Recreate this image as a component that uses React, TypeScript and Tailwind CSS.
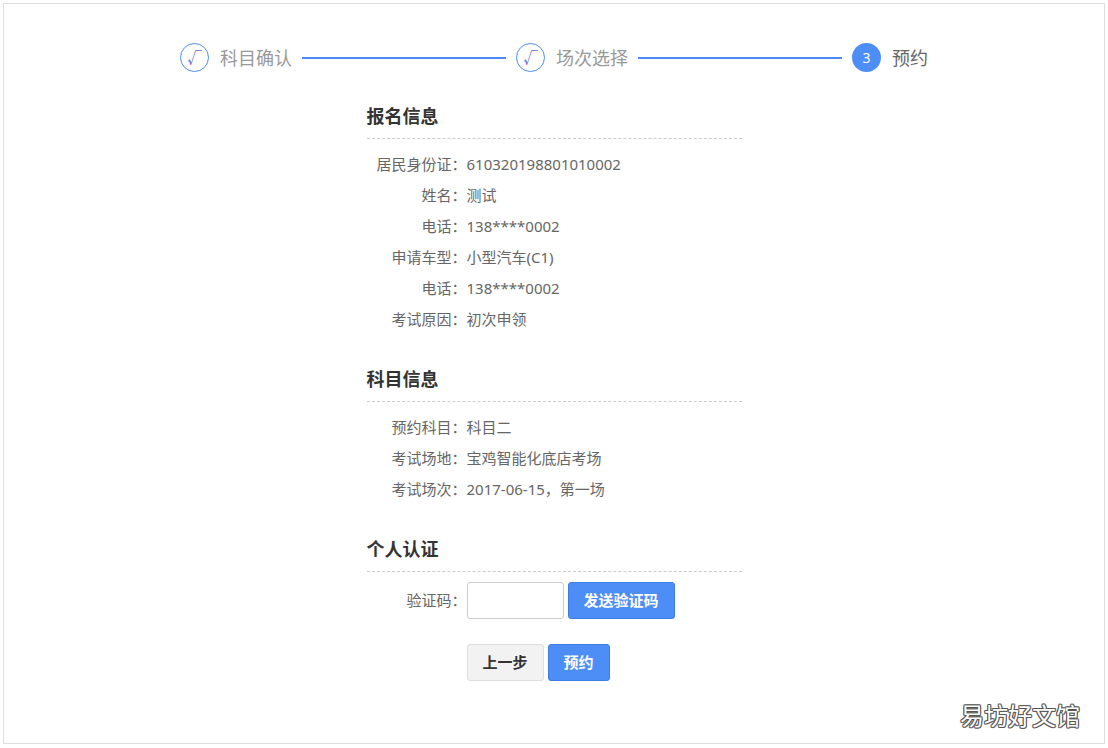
import React from "react";

const FONT = '"Noto Sans", "Noto Sans CJK SC", sans-serif';

type Row = { label: string; value: string };

const signupRows: Row[] = [
  { label: "居民身份证", value: "610320198801010002" },
  { label: "姓名", value: "测试" },
  { label: "电话", value: "138****0002" },
  { label: "申请车型", value: "小型汽车(C1)" },
  { label: "电话", value: "138****0002" },
  { label: "考试原因", value: "初次申领" },
];

const subjectRows: Row[] = [
  { label: "预约科目", value: "科目二" },
  { label: "考试场地", value: "宝鸡智能化底店考场" },
  { label: "考试场次", value: "2017-06-15，第一场" },
];

function StepDone({ label }: { label: string }) {
  return (
    <div className="flex items-center shrink-0">
      <div className="w-[29px] h-[29px] rounded-full border border-[#4d8ef6] flex items-center justify-center text-[15px] text-[#6a5fd8]">
        √
      </div>
      <span className="ml-[11px] text-[18px] leading-[24px] text-[#999]">{label}</span>
    </div>
  );
}

function Line() {
  return <div className="flex-1 h-[2px] bg-[#4a8af4] mx-[10px]" />;
}

function Section({ title, children, first }: { title: string; children: React.ReactNode; first?: boolean }) {
  return (
    <div className={first ? "" : "mt-[32px]"}>
      <h2 className="text-[18px] leading-[24px] font-bold text-[#333] pb-[10px] border-b border-dashed border-[#ccc]">
        {title}
      </h2>
      <div className="mt-[10px]">{children}</div>
    </div>
  );
}

function InfoRow({ label, value }: Row) {
  return (
    <div className="flex h-[31px] items-center text-[15px] text-[#666]">
      <span className="w-[100px] text-right shrink-0">{label}：</span>
      <span>{value}</span>
    </div>
  );
}

export default function App() {
  return (
    <div className="w-[1108px] h-[748px] bg-white p-[3px]" style={{ fontFamily: FONT }}>
      <div className="relative h-[741px] border border-[#ddd] pt-[39px]">
        {/* Steps */}
        <div className="w-[748px] mx-auto flex items-center">
          <StepDone label="科目确认" />
          <Line />
          <StepDone label="场次选择" />
          <Line />
          <div className="flex items-center shrink-0">
            <div className="w-[29px] h-[29px] rounded-full bg-[#4d8ef6] flex items-center justify-center text-[14px] text-white">
              3
            </div>
            <span className="ml-[11px] text-[18px] leading-[24px] text-[#666]">预约</span>
          </div>
        </div>

        <div className="w-[375px] mx-auto mt-[32px]">
          <Section title="报名信息" first>
            {signupRows.map((r, i) => (
              <InfoRow key={i} {...r} />
            ))}
          </Section>

          <Section title="科目信息">
            {subjectRows.map((r, i) => (
              <InfoRow key={i} {...r} />
            ))}
          </Section>

          <Section title="个人认证">
            <div className="flex items-center text-[15px] text-[#666]">
              <span className="w-[100px] text-right shrink-0">验证码：</span>
              <input
                type="text"
                className="w-[97px] h-[37px] border border-[#ccc] rounded-[3px] outline-none px-2"
              />
              <button className="ml-[4px] w-[107px] h-[37px] rounded-[3px] bg-[#4d8ef6] border border-[#3d7ee6] text-white font-bold text-[15px]">
                发送验证码
              </button>
            </div>
            <div className="flex mt-[25px] pl-[100px]">
              <button className="w-[77px] h-[37px] rounded-[3px] bg-[#f2f2f2] border border-[#ddd] text-[#333] font-bold text-[15px]">
                上一步
              </button>
              <button className="ml-[4px] w-[62px] h-[37px] rounded-[3px] bg-[#4d8ef6] border border-[#3d7ee6] text-white font-bold text-[15px]">
                预约
              </button>
            </div>
          </Section>
        </div>

        {/* Watermark */}
        <div className="absolute right-[24px] bottom-[13px] text-[24px] leading-[28px] text-white [text-shadow:-1px_0_#555,1px_0_#555,0_-1px_#555,0_1px_#555,-1px_-1px_#777,1px_1px_#777,-1px_1px_#777,1px_-1px_#777]">
          易坊好文馆
        </div>
      </div>
    </div>
  );
}
